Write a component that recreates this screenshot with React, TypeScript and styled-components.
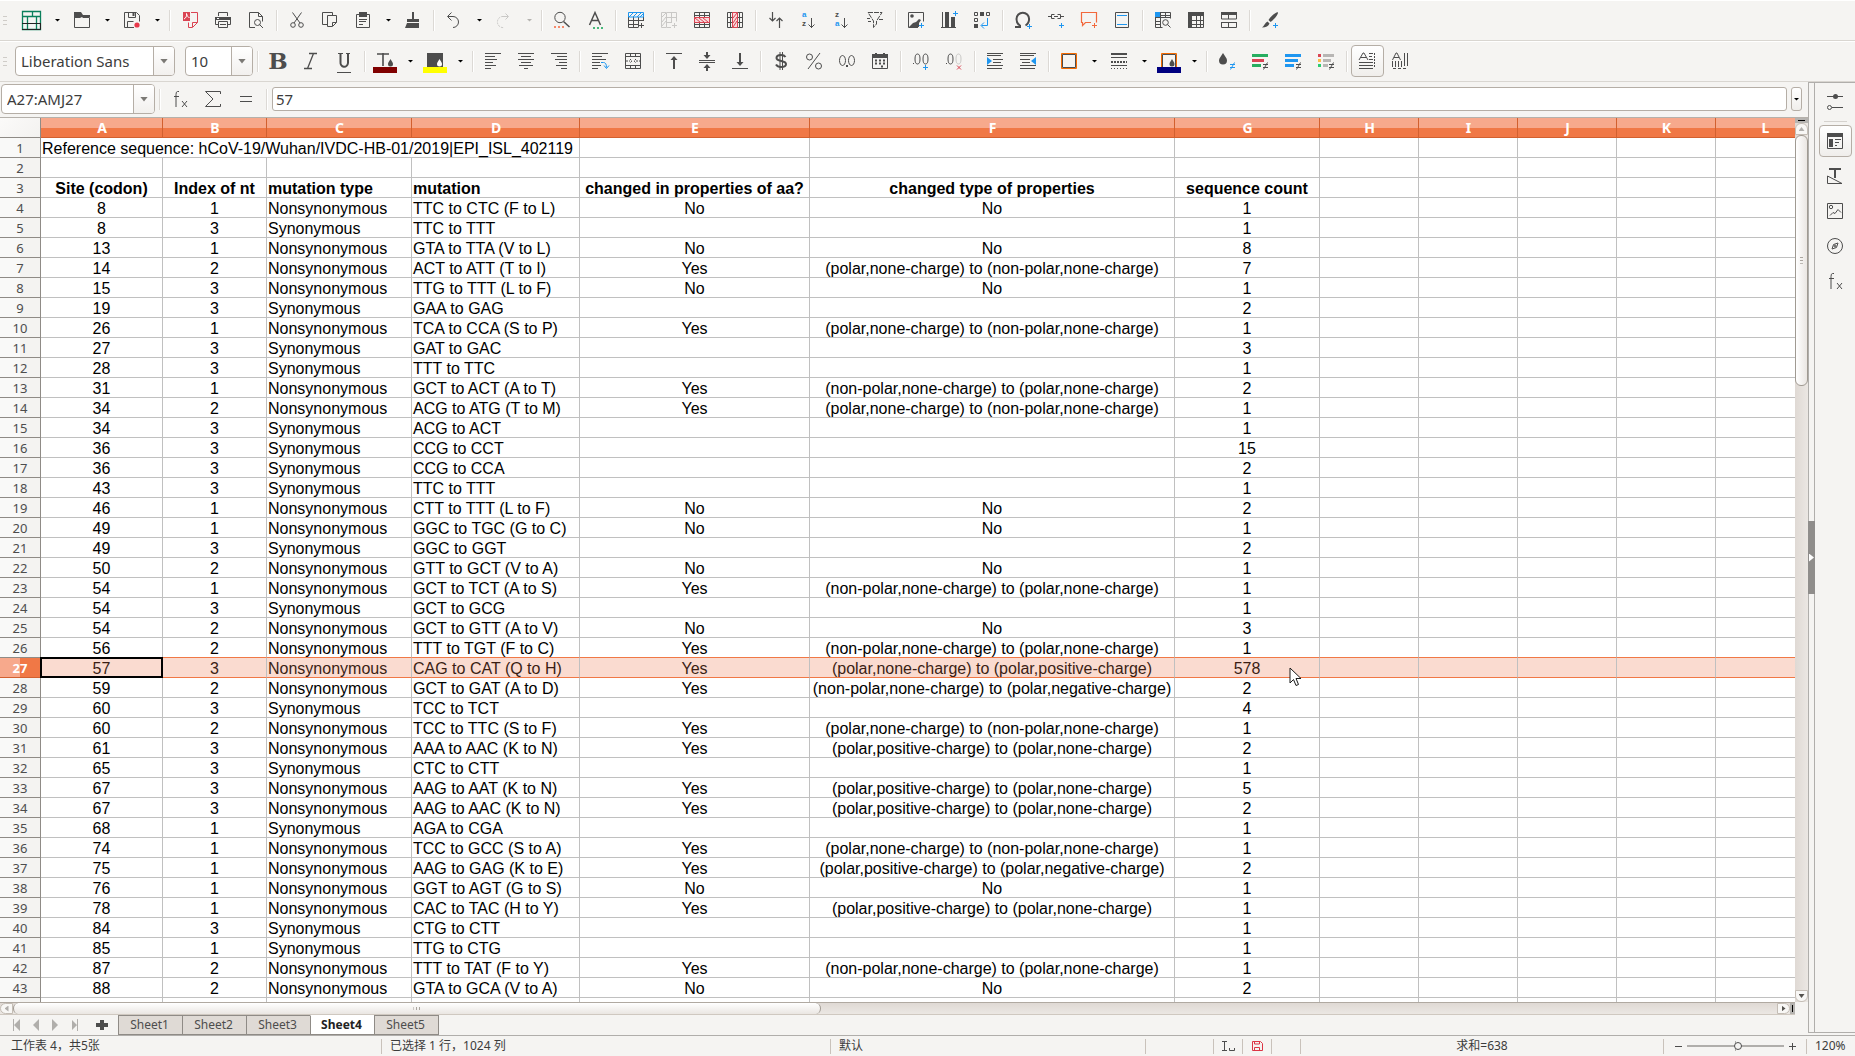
import React from "react";
import styled, { createGlobalStyle, css } from "styled-components";

/* ---------- palette ---------- */
const INK = "#4d4d4d";
const BLUE = "#1e96f0";
const RED = "#da4453";
const ORANGE = "#f2683c";
const PALE = "#c9c8c6";
const PANEL = "#f5f4f2";
const UI_FONT = `"Noto Sans", "Noto Sans CJK SC", sans-serif`;
const CELL_FONT = `"Liberation Sans", Arial, sans-serif`;

const GlobalStyle = createGlobalStyle`
  *, *::before, *::after { box-sizing: border-box; }
  body { margin: 0; background: ${PANEL}; overflow: hidden; }
  button, input { font: inherit; color: inherit; margin: 0; padding: 0; }
`;

/* ---------- icons, drawn on a 16px grid ---------- */
const Glyph = styled.svg`
  display: block;
  flex: none;
  width: 16px;
  height: 16px;
  overflow: visible;
  fill: none;
  stroke: ${INK};
  stroke-width: 1;
`;
const GlyphText = styled.text`
  stroke: none;
  font-family: ${CELL_FONT};
`;

const plus = (x: number, y: number, c: string = BLUE) => (
  <path d={`M${x - 2.5} ${y}h5M${x} ${y - 2.5}v5`} stroke={c} />
);
const lines = (ys: [number, number, number][], c: string = INK) => (
  <path d={ys.map(([x, y, w]) => `M${x} ${y}h${w}`).join("")} stroke={c} />
);
const notEqual = (c: string) => <path d="M11 11.500h5M11 14.500h5M15.500 9.500l-4 7" stroke={c} />;

const icons: Record<string, React.ReactNode> = {
  calc: (
    <>
      <path d="M-1.500 -.5h18v18h-18zM-1.500 4.500h18M3.500 4.500v13M8.500 -.5v5M12.500 4.500v13" stroke="#0b7f5b" strokeWidth="1.300" />
      <path d="M-2 11.500h19M-2 17.500h18.500v-6" stroke="#222" />
    </>
  ),
  open: (
    <>
      <path d="M.5 4v11.500h15v-10h-7" />
      <path d="M0 0h7l2 3h7v2H8l-2 1H0z" fill={INK} stroke="none" />
    </>
  ),
  save: (
    <>
      <path d="M10 15.500h-9.500v-15h12l3 3v6M3.500 15v-5.500h6M4.500 .5v5h7v-5" />
      <path d="M8.500 1h2v3h-2z" fill={INK} stroke="none" />
      <circle cx="13" cy="13" r="2.600" fill="#e8384a" stroke="none" />
    </>
  ),
  pdf: (
    <>
      <path d="M9 .5h6.500v10l-5 5h-4v-5" stroke={RED} />
      <path d="M10.500 15v-4.500h5" stroke={RED} />
      <path d="M1 0h7v9H1z" fill={RED} stroke="none" />
      <path d="M2 7c2-1 3-3 2.500-5.500C5 4 6 5.500 7.500 5.500" stroke="#fff" />
    </>
  ),
  print: (
    <>
      <path d="M3.500 4v-3.500h9v3.500M3.500 12.500h-3v-6h15v6h-3M3.500 9.500h9v6h-9zM5 12.500h6" />
      <path d="M0 5h16v3H0z" fill={INK} stroke="none" />
      <path d="M2 6.500h2" stroke="#fff" />
    </>
  ),
  preview: (
    <>
      <path d="M7 15.500h-5.500v-15h9l4 4v5M10.500 .5v4h4" />
      <circle cx="9.500" cy="10.500" r="3" />
      <path d="M11.500 12.500l3.500 3.500" />
    </>
  ),
  cut: (
    <>
      <circle cx="4" cy="13" r="2.300" />
      <circle cx="12" cy="13" r="2.300" />
      <path d="M3.500 .5l7.500 10.500M12.500 .5L5 11" />
    </>
  ),
  copy: (
    <>
      <path d="M5.500 12.500h-5v-12h10v3" />
      <path d="M5.500 3.500h9v7l-4 4h-5zM10.500 14v-3.500h4" />
    </>
  ),
  paste: (
    <>
      <path d="M1.500 2.500h13v13h-13zM4 7.500h8M4 9.500h7M4 12.500h4" />
      <path d="M4 0h8v5H4z" fill={INK} stroke="none" />
    </>
  ),
  brush: <path d="M7 0h2v7H7zM2 7h12v3H2zM2 11h12v5H0z" fill={INK} stroke="none" />,
  undo: <path d="M5.500 .5L1.500 4.500l4 4M2 4.500h5a5.500 5.500 0 0 1 0 11" />,
  redo: (
    <>
      <path d="M9.500 1.500l3 3-3 3M12 4.500h-5" stroke={PALE} />
      <path d="M7 4.500h-1a5.500 5.500 0 0 0 2 11" stroke={PALE} strokeDasharray="2 1" />
    </>
  ),
  find: (
    <>
      <circle cx="6" cy="5.500" r="5.200" />
      <path d="M9.500 9.500l6 5.500" strokeWidth="1.500" />
      <path d="M0 15h10" stroke="#f58a6c" strokeWidth="2" strokeDasharray="2 2" />
    </>
  ),
  spell: (
    <>
      <path d="M2.500 13L8 .5l5.500 12.500M4.500 8.500h7" strokeWidth="1.500" />
      <path d="M6 16h10" stroke="#46b97a" strokeWidth="2" strokeDasharray="2 2" />
    </>
  ),
  insRow: (
    <>
      <path d="M.5 5v10.500h10M5.500 5v10M10.500 5v10M15.500 5v4M0 8.500h15M0 12.500h11" />
      <path d="M.5 .5h15v4.500h-15zM1 5l4-4M5 5l4-4M9 5l4-4M12 5l3-3" stroke={BLUE} />
      {plus(13.5, 13.5, INK)}
    </>
  ),
  insCol: (
    <>
      <path d="M6 .5h9.500v9M10.500 0v10M6 5.500h10M6 10.500h5M6 15.500h4" stroke={PALE} />
      <path d="M.5 .5h5v15h-5zM1 5l4-4M1 10l4-5M1 14l4-5" stroke={PALE} />
      {plus(13.5, 13.5, PALE)}
    </>
  ),
  delRow: (
    <>
      <path d="M.5 .5h15v15h-15zM5.500 0v16M10.500 0v16M0 3.500h16M0 12.500h16" />
      <path d="M.5 5.500h15v5h-15z" fill="#f8d9dc" stroke={RED} />
      <path d="M1 6l5 4M5 6l5 4M9 6l5 4" stroke={RED} />
    </>
  ),
  delCol: (
    <>
      <path d="M.5 .5h15v15h-15zM0 5.500h16M0 10.500h16M3.500 0v16M12.500 0v16" />
      <path d="M5.500 .5h5v15h-5z" fill="#f8d9dc" stroke={RED} />
      <path d="M6 6l4-5M6 11l4-6M6 15l4-6" stroke={RED} />
    </>
  ),
  sort: <path d="M4.500 0v9M1.500 6l3 3 3-3M11.500 16V6M8.500 9l3-3 3 3" strokeWidth="1.200" />,
  asc: (
    <>
      <GlyphText x="1" y="5" fontSize="8" fontWeight="700" fill={BLUE}>a</GlyphText>
      <GlyphText x="1" y="14" fontSize="8" fontWeight="700" fill={INK}>z</GlyphText>
      <path d="M10.500 6v10M7.500 12.500l3 3 3-3" />
    </>
  ),
  desc: (
    <>
      <GlyphText x="1" y="5" fontSize="8" fontWeight="700" fill={INK}>z</GlyphText>
      <GlyphText x="1" y="14" fontSize="8" fontWeight="700" fill={BLUE}>a</GlyphText>
      <path d="M10.500 6v10M7.500 12.500l3 3 3-3" />
    </>
  ),
  filter: (
    <>
      <path d="M1 .5h14L9.500 9v3l-3 3.500V9z" strokeDasharray="5 1" />
      <path d="M0 6.500h3M12 7.500h4M1 9.500h3" />
    </>
  ),
  image: (
    <>
      <path d="M10 15.500H.5V.5h15v9" />
      <circle cx="4" cy="4" r="1.800" fill={INK} stroke="none" />
      <path d="M1 15l4-4 3-1 3-3 2 1-2 3v4z" fill={INK} stroke="none" />
      {plus(13.5, 13.5)}
    </>
  ),
  chart: (
    <>
      <path d="M1.500 0v15M0 15.500h15" />
      <path d="M4 0h4v15H4zM10 5h4v10h-4z" fill={INK} stroke="none" />
      {plus(14.5, 1.5)}
    </>
  ),
  pivot: (
    <>
      <path d="M.5 .5h3v3h-3zM12.500 .5h3v3h-3zM.5 6.500h3v3h-3z" />
      <path d="M6 0h4v4H6zM0 12h4v4H0z" fill={INK} stroke="none" />
      <path d="M13.500 6v7.500h-6M10 10.500l-3 3 3 3" stroke={BLUE} />
    </>
  ),
  omega: (
    <>
      <path d="M0 15h5v-1.500C2.500 12 1.500 9.500 1.500 7a6.300 6.300 0 0 1 12.600 0c0 2.500-1 5-3.600 6.500" strokeWidth="2" />
      {plus(14.5, 14.5)}
    </>
  ),
  link: (
    <>
      <path d="M0 4.500h4M12 4.500h4M6.500 2.500h-3v4h3M9.500 2.500h3v4h-3M6 4.500h4" />
      {plus(13.5, 13.5)}
    </>
  ),
  comment: (
    <>
      <path d="M10 10.500H4.500l-3 3v-3h-1V.5h15v10" stroke={ORANGE} strokeWidth="1.200" />
      {plus(13.5, 13.5, ORANGE)}
    </>
  ),
  header: (
    <>
      <path d="M1.500 .5h13v15h-13z" />
      <path d="M3 3.500h10M3 12.500h10" stroke={BLUE} />
    </>
  ),
  freeze: (
    <>
      <path d="M.5 .5h15v6M.5 .5v15h7M5.500 0v16M0 5.500h16M10.500 0v5M0 9.500h6M0 12.500h6M6 3.500h10" />
      <path d="M0 0h5v5H0z" fill={BLUE} stroke="none" />
      <circle cx="10.500" cy="10.500" r="2.800" />
      <path d="M12.500 12.500l3 3" />
    </>
  ),
  tableFill: (
    <>
      <path d="M.5 .5h15v15h-15zM8.500 4v12M12.500 4v12M4 8.500h12M4 12.500h12" />
      <path d="M0 0h16v4H4v12H0z" fill={INK} stroke="none" />
    </>
  ),
  split: (
    <>
      <path d="M0 0h16v3H0zM0 10h16v1H0z" fill={INK} stroke="none" />
      <path d="M.5 3v4h15V3M7.500 3v4M.5 10v5.500h15V10M7.500 10v5" />
    </>
  ),
  draw: (
    <>
      <path d="M15.500 0c-3 1-7 5-9 8l2 2c3-2 6.500-6 7.500-9zM5.500 9.500l2 2C6.500 14 4 15.500 0 15.500 2 14 3 11 5.500 9.500z" fill={INK} stroke="none" />
      {plus(13.5, 13.5)}
    </>
  ),

  bold: (
    <GlyphText x="8" y="16" textAnchor="middle" fontSize="23" fontWeight="700" fill={INK} style={{ fontFamily: `"DejaVu Serif", serif` }}>B</GlyphText>
  ),
  italic: <path d="M6 .5h8M1 15.500h8M10.500 .5l-6 15" strokeWidth="1.300" />,
  underline: (
    <>
      <path d="M2 .5h5M10 .5h4" />
      <path d="M4.500 0v9a3.500 4 0 0 0 7.500 1v-10" strokeWidth="2" />
      <path d="M1 19.500h14" />
    </>
  ),
  fontColor: (
    <>
      <path d="M0 1h12M6 0v13" strokeWidth="1.600" />
      <path d="M13.500 6c1.500 2.500 2.500 3.500 2.500 5a2.500 2.500 0 0 1-5 0c0-1.500 1-2.500 2.500-5z" fill={INK} stroke="none" />
      <path d="M-4 14h24v6H-4z" fill="#800000" stroke="none" />
    </>
  ),
  highlight: (
    <>
      <path d="M0 0h16v14H0z" fill={INK} stroke="none" />
      <path d="M12.500 6c1.500 2.500 2.500 3.500 2.500 5a2.500 2.500 0 0 1-5 0c0-1.500 1-2.500 2.500-5z" fill="#fff" stroke="none" />
      <path d="M-4 14h24v6H-4z" fill="#ffff00" stroke="none" />
    </>
  ),
  left: lines([[0, .5, 16], [0, 3.5, 10], [0, 6.5, 12], [0, 9.5, 8], [0, 12.5, 11], [0, 15.5, 6]]),
  center: lines([[0, .5, 16], [3, 3.5, 10], [0, 6.5, 16], [3, 9.5, 10], [1, 12.5, 14], [6, 15.5, 4]]),
  right: lines([[0, .5, 16], [6, 3.5, 10], [4, 6.5, 12], [8, 9.5, 8], [5, 12.5, 11], [10, 15.5, 6]]),
  wrap: (
    <>
      {lines([[0, .5, 16], [0, 3.5, 10], [0, 6.5, 14], [0, 9.5, 8], [0, 12.5, 9], [0, 15.5, 6]])}
      <path d="M9 9.500h2.500q3 0 3 5M12 12.500l2.500 3 2.500-3" stroke={BLUE} />
    </>
  ),
  merge: (
    <>
      <path d="M.5 .5h15v15h-15zM0 3.500h16M0 12.500h16M5.500 0v4M10.500 0v4M5.500 12v4M10.500 12v4" />
      <path d="M1 8h4M11 8h4M5 6l2 2-2 2M11 6L9 8l2 2" strokeDasharray="2 1" />
    </>
  ),
  top: (
    <>
      <path d="M0 .5h16" />
      <path d="M7 6h2v10H7zM8 3l3.500 4h-7z" fill={INK} stroke="none" />
    </>
  ),
  middle: (
    <>
      <path d="M0 7.500h16M0 9.500h16" />
      <path d="M7 -1h2v3h2.500L8 6 4.500 2H7zM7 18h2v-3h2.500L8 11l-3.500 4H7z" fill={INK} stroke="none" />
    </>
  ),
  bottom: (
    <>
      <path d="M0 15.500h16" />
      <path d="M7 0h2v9H7zM8 13l3.500-4h-7z" fill={INK} stroke="none" />
    </>
  ),
  currency: (
    <>
      <path d="M12.500 4C11.500 2.500 10 2 8 2 5 2 3.500 3.200 3.500 5c0 4 9.500 2 9.500 6 0 2-2 3-5 3-2.500 0-4-.8-5-2.500" strokeWidth="2" />
      <path d="M7 -1v18M9.500 -1v18" />
    </>
  ),
  percent: (
    <>
      <circle cx="3.500" cy="4" r="3" />
      <circle cx="12.500" cy="13" r="3" />
      <path d="M14 0L2 16" />
    </>
  ),
  number: (
    <>
      <ellipse cx="3.500" cy="7.500" rx="3" ry="5" />
      <ellipse cx="12.500" cy="7.500" rx="3" ry="5" />
      <path d="M7 12h2v2H7z" fill={INK} stroke="none" />
    </>
  ),
  date: (
    <>
      <path d="M.5 2v13.500h15V2" />
      <path d="M0 1h3V0h2v1h6V0h2v1h3v4H0z" fill={INK} stroke="none" />
      <path d="M3 7.500h10M3 10.500h10M9 13.500h4" strokeWidth="2" strokeDasharray="2 2" />
    </>
  ),
  addDec: (
    <>
      <ellipse cx="4.500" cy="6" rx="2.500" ry="5" />
      <ellipse cx="12.500" cy="6" rx="2.500" ry="5" />
      <path d="M0 10.500h1" />
      {plus(12.5, 14.5)}
    </>
  ),
  delDec: (
    <>
      <ellipse cx="4.500" cy="6" rx="2.500" ry="5" />
      <ellipse cx="12.500" cy="6" rx="2.500" ry="5" stroke={PALE} />
      <path d="M0 10.500h1" />
      <path d="M11 12.500l4 4M15 12.500l-4 4" stroke={RED} />
    </>
  ),
  indent: (
    <>
      {lines([[0, .5, 16], [0, 2.5, 14], [6, 6.5, 10], [6, 9.5, 8], [0, 12.5, 16], [0, 15.5, 15]])}
      <path d="M0 4l5 4-5 4z" fill={BLUE} stroke="none" />
    </>
  ),
  outdent: (
    <>
      {lines([[0, .5, 16], [0, 2.5, 14], [0, 6.5, 10], [2, 9.5, 8], [0, 12.5, 16], [0, 15.5, 15]])}
      <path d="M16 4l-5 4 5 4z" fill={BLUE} stroke="none" />
    </>
  ),
  borders: (
    <>
      <path d="M.5 .5h15v15h-15z" stroke="#f56a00" />
      <path d="M1.500 1.500h13v13h-13z" />
    </>
  ),
  lineStyle: (
    <>
      <path d="M0 1h16" strokeWidth="2" />
      <path d="M0 4.500h16" />
      <path d="M0 9h16" strokeWidth="2" strokeDasharray="2 1" />
      <path d="M0 12.500h16" />
      <path d="M0 15.500h16" strokeDasharray="1 2" />
    </>
  ),
  borderColor: (
    <>
      <path d="M.5 14V.5h15V14" stroke="#f56a00" />
      <path d="M1.500 14V1.500h13v12.500" />
      <path d="M11 6c1.500 2.500 2.500 3.500 2.500 5a2.500 2.500 0 0 1-5 0c0-1.500 1-2.500 2.500-5z" fill={INK} stroke="none" />
      <path d="M-4 14h24v6H-4z" fill="#000080" stroke="none" />
    </>
  ),
  drop: (
    <>
      <path d="M4 0c2 3.500 4 5 4 7.500a4 4 0 0 1-8 0C0 5 2 3.500 4 0z" fill={INK} stroke="none" />
      {notEqual(BLUE)}
    </>
  ),
  condA: (
    <>
      <path d="M0 2.500h16M0 12.500h9" stroke="#27ae60" strokeWidth="3" />
      <path d="M0 7.500h12" stroke={RED} strokeWidth="3" />
      {notEqual(INK)}
    </>
  ),
  condB: (
    <>
      <path d="M0 2.500h16M0 7.500h13M0 12.500h9" stroke={BLUE} strokeWidth="3" />
      {notEqual(INK)}
    </>
  ),
  condC: (
    <>
      <path d="M5 2.500h11M5 7.500h8M5 12.500h5" stroke="#b8b6b4" strokeWidth="3" />
      <path d="M0 2.500h3" stroke={RED} strokeWidth="3" />
      <path d="M0 7.500h3" stroke="#fdbc4b" strokeWidth="3" />
      <path d="M0 12.500h3" stroke="#2ecc71" strokeWidth="3" />
      {notEqual(INK)}
    </>
  ),
  ltr: (
    <>
      <path d="M0 7L4 0h1l4 7M2 4.500h5M10 .5h4M10 3.500h3M10 6.500h4M0 9.500h14M0 12.500h14M0 15.500h14" />
      <path d="M15.500 0v2M15.500 3v2M15.500 6v2M15.500 9v2M15.500 12v2" />
    </>
  ),
  ttb: (
    <>
      <path d="M.5 7L4 0h1l3.500 7M2 4.500h5M.5 8v6M3.500 8v6M6.500 8v6M9.500 8v6M12.500 0v13M15.500 0v13" />
      <path d="M1 15.500h15" strokeDasharray="3 2" />
    </>
  ),

  fx: (
    <>
      <path d="M7 .5h-1.500q-1.500 0-1.500 3v12.500M2 5.500h5" />
      <path d="M10 10l5 6M15 10l-5 6" />
    </>
  ),
  sum: <path d="M15.500 3V.5H.5L8 8 .5 15.500h15V13" />,
  equals: <path d="M2 5.500h12M2 10.500h12" />,

  sliders: (
    <>
      <path d="M0 2.500h16M5 13.500h11" />
      <circle cx="8.500" cy="2.500" r="2.500" fill={INK} stroke="none" />
      <circle cx="2.500" cy="13.500" r="2" />
    </>
  ),
  properties: (
    <>
      <path d="M.5 .5h15v15h-15zM8 6.500h6M8 9.500h4M8 12.500h2" />
      <path d="M0 0h16v4H0zM2 6h4v8H2z" fill={INK} stroke="none" />
    </>
  ),
  styles: (
    <>
      <path d="M2 1h12M8 0v10" strokeWidth="2" />
      <path d="M.5 8v7.500H15z" />
    </>
  ),
  gallery: (
    <>
      <path d="M.5 .5h15v15h-15zM3 12.500l3-3 2 1 3-4 3 3" />
      <circle cx="4" cy="4" r="1.700" />
    </>
  ),
  navigator: (
    <>
      <circle cx="8" cy="8" r="7.500" />
      <path d="M11 5l-1.500 4.500L5 11l1.500-4.500z" />
      <circle cx="8" cy="8" r="1" />
    </>
  ),
};

const Icon = ({ name }: { name: string }) => (
  <Glyph viewBox="0 0 16 16" aria-hidden="true">{icons[name]}</Glyph>
);

/* ---------- shell ---------- */
const Shell = styled.div`
  display: flex;
  flex-direction: column;
  height: 100vh;
  background: ${PANEL};
  color: #3c3c3c;
  font: 15px/20px ${UI_FONT};
`;

/* ---------- toolbars ---------- */
const Toolbar = styled.div`
  display: flex;
  align-items: center;
  flex: none;
  height: 41px;
  padding-bottom: 1px;
  border-top: 1px solid #fff;
  border-bottom: 1px solid #d9d6d1;
`;
const Grip = styled.span<{ $width: number }>`
  flex: none;
  width: ${(p) => p.$width}px;
  height: 9px;
  background: repeating-linear-gradient(#cfccc8 0 1px, transparent 1px 4px) 3px 0 / 4px 9px no-repeat;
`;
const Button = styled.button<{ $checked?: boolean }>`
  display: flex;
  align-items: center;
  flex: none;
  width: 33px;
  height: 32px;
  padding-left: 7px;
  border: 1px solid transparent;
  border-radius: 4px;
  background: none;
  ${(p) => p.$checked && css`
    border-color: #b5aea6;
    background: linear-gradient(#fff, #f0eeeb);
  `}
`;
const ArrowButton = styled.button`
  flex: none;
  width: 17px;
  height: 32px;
  border: 0;
  background: none;
  &::before {
    content: "";
    display: block;
    margin: 0 auto;
    width: 6px;
    height: 3px;
    background: #000;
    clip-path: polygon(0 0, 100% 0, 50% 100%);
  }
  &:disabled::before { background: #b5b3b0; }
`;
const Divider = styled.span`
  flex: none;
  width: 8px;
  height: 21px;
  background: linear-gradient(90deg, #dcd9d5 50%, #fff 50%) 3px 0 / 2px 100% no-repeat;
`;

type Tool = string | [string, string];
const topTools: Tool[] = [
  ["calc", "+"], ["open", "+"], ["save", "+"], "|", "pdf", "print", "preview", "|",
  "cut", "copy", ["paste", "+"], "brush", "|", ["undo", "+"], ["redo", "-"], "|",
  "find", "spell", "|", "insRow", "insCol", "delRow", "delCol", "|",
  "sort", "asc", "desc", "filter", "|", "image", "chart", "pivot", "|",
  "omega", "link", "comment", "header", "|", "freeze", "tableFill", "split", "|", "draw",
];
const formatTools: Tool[] = [
  "|", "bold", "italic", "underline", "|", ["fontColor", "+"], ["highlight", "+"], "|",
  "left", "center", "right", "|", "wrap", "merge", "|", "top", "middle", "bottom", "|",
  "currency", "percent", "number", "date", "|", "addDec", "delDec", "|", "indent", "outdent", "|",
  ["borders", "+"], ["lineStyle", "+"], ["borderColor", "+"], "|",
  "drop", "condA", "condB", "condC", "|", "ltr", "ttb",
];

const Tools = ({ items }: { items: Tool[] }) => (
  <>
    {items.map((t, i) => {
      if (t === "|") return <Divider key={i} />;
      const name = typeof t === "string" ? t : t[0];
      const off = typeof t !== "string" && t[1] === "-";
      return (
        <React.Fragment key={i}>
          <Button type="button" aria-label={name} disabled={off} $checked={name === "ltr"}>
            <Icon name={name} />
          </Button>
          {typeof t !== "string" && <ArrowButton type="button" aria-label={`${name} options`} disabled={off} />}
        </React.Fragment>
      );
    })}
  </>
);

const Combo = styled.div<{ $width: number }>`
  display: flex;
  flex: none;
  width: ${(p) => p.$width}px;
  height: 30px;
  border: 1px solid #b5aea6;
  border-radius: 4px;
  background: #fff;
  overflow: hidden;
`;
const ComboInput = styled.input`
  flex: 1;
  min-width: 0;
  padding-left: 5px;
  border: 0;
  background: none;
  outline: 0;
`;
const ComboArrow = styled.button`
  flex: none;
  width: 21px;
  border: 0;
  border-left: 1px solid #b5aea6;
  background: linear-gradient(#fff, #f2f0ee);
  &::before {
    content: "";
    display: block;
    margin: 0 auto;
    width: 8px;
    height: 5px;
    background: #7b7975;
    clip-path: polygon(0 0, 100% 0, 50% 100%);
  }
`;
const ComboBox = ({ label, value, width }: { label: string; value: string; width: number }) => (
  <Combo $width={width}>
    <ComboInput aria-label={label} defaultValue={value} />
    <ComboArrow type="button" aria-label={`${label} list`} />
  </Combo>
);
const FormatFields = styled.div`
  display: flex;
  gap: 10px;
  padding-right: 1px;
`;

/* ---------- main area ---------- */
const Main = styled.div`
  display: flex;
  flex: 1;
  min-height: 0;
`;
const Document = styled.main`
  display: flex;
  flex-direction: column;
  flex: 1;
  min-width: 0;
`;
const FormulaBar = styled.div`
  display: flex;
  align-items: center;
  flex: none;
  height: 36px;
  padding: 0 6px 1px 1px;
  border-bottom: 1px solid #b5b1ab;
`;
const FormulaTools = styled.div`
  display: flex;
  align-items: center;
  margin: 0 1px;
`;
const FormulaInput = styled.input`
  flex: 1;
  min-width: 0;
  height: 24px;
  padding-left: 3px;
  border: 1px solid #b5aea6;
  border-radius: 3px;
  background: #fff;
  outline: 0;
`;
const FormulaExpand = styled(ArrowButton)`
  width: 11px;
  height: 24px;
  margin-left: 4px;
  border: 1px solid #b5aea6;
  border-radius: 3px;
  background: linear-gradient(#fff, #f0eeeb);
`;

const SheetArea = styled.div`
  display: flex;
  flex: 1;
  min-height: 0;
`;
const Viewport = styled.div`
  flex: 1;
  min-width: 0;
  overflow: hidden;
  background: #fff;
`;
const Grid = styled.table`
  width: 1814px;
  table-layout: fixed;
  border-collapse: separate;
  border-spacing: 0;
  font: 16px/17px ${CELL_FONT};
  color: #000;
`;
const Col = styled.col<{ $width: number }>`
  width: ${(p) => p.$width}px;
`;
const Corner = styled.td`
  height: 20px;
  padding: 0;
  border-right: 1px solid #8f8b86;
  border-bottom: 1px solid #8f8b86;
  background: linear-gradient(135deg, #fbfaf9, #f3f2f0);
`;
const ColumnHead = styled.th`
  height: 20px;
  padding: 0 0 0 1px;
  border-right: 1px solid #d2602f;
  border-bottom: 1px solid #d2602f;
  background: linear-gradient(#f7a98c 50%, #f07846 50%);
  color: #fff;
  font: 700 14px/19px ${UI_FONT};
`;
const RowHead = styled.th<{ $selected?: boolean }>`
  height: 20px;
  padding: 1px 0 0;
  border-right: 1px solid #8f8b86;
  border-bottom: 1px solid #8f8b86;
  background: linear-gradient(90deg, #f9f9f8 50%, #f4f3f1 50%);
  color: ${INK};
  font: 400 13px/18px ${UI_FONT};
  ${(p) => p.$selected && css`
    border-color: #d2602f;
    background: linear-gradient(90deg, #f7a98c 50%, #f07846 50%);
    color: #fff;
    font-weight: 700;
  `}
`;
const Cell = styled.td<{ $align?: "left" | "center"; $bold?: boolean; $selected?: boolean; $edge?: boolean }>`
  position: relative;
  height: 20px;
  padding: 2px 1px 0;
  border-right: 1px solid #c0c0c0;
  border-bottom: 1px solid ${(p) => (p.$selected || p.$edge ? "#f07846" : "#c0c0c0")};
  background: ${(p) => (p.$selected ? "#fadbd0" : "#fff")};
  color: ${(p) => (p.$selected ? "#3b1e14" : "#000")};
  font-weight: ${(p) => (p.$bold ? 700 : 400)};
  text-align: ${(p) => p.$align ?? "center"};
  white-space: nowrap;
`;
/* outline of the active cell, drawn over its grid lines */
const ActiveFrame = styled.span`
  position: absolute;
  inset: -1px;
  border: 2px solid #000;
`;
const Pointer = styled.svg`
  position: absolute;
  z-index: 2;
  left: 114px;
  top: 9px;
  width: 13px;
  height: 20px;
`;

/* ---------- scroll bars ---------- */
const VScroll = styled.div`
  display: flex;
  flex-direction: column;
  flex: none;
  width: 13px;
  background: linear-gradient(90deg, #dfd9d4, #ebe7e3);
`;
const HScroll = styled.div`
  display: flex;
  flex: none;
  height: 13px;
  margin-right: 13px;
  background: linear-gradient(#dfd9d4, #ebe7e3);
  border-top: 1px solid #b0a9a1;
  border-bottom: 1px solid #cfc8c0;
`;
const SplitHandle = styled.span<{ $vertical?: boolean }>`
  flex: none;
  display: flex;
  align-items: center;
  justify-content: center;
  background: #b5b3b0;
  width: ${(p) => (p.$vertical ? "13px" : "5px")};
  height: ${(p) => (p.$vertical ? "5px" : "auto")};
  &::before {
    content: "";
    background: #000;
    width: ${(p) => (p.$vertical ? "7px" : "1px")};
    height: ${(p) => (p.$vertical ? "1px" : "7px")};
  }
`;
const arrowShape = {
  up: "polygon(50% 0, 100% 100%, 0 100%)",
  down: "polygon(0 0, 100% 0, 50% 100%)",
  left: "polygon(100% 0, 100% 100%, 0 50%)",
  right: "polygon(0 0, 100% 50%, 0 100%)",
};
const ScrollArrow = styled.button<{ $dir: keyof typeof arrowShape; $dim?: boolean }>`
  display: flex;
  align-items: center;
  justify-content: center;
  flex: none;
  width: 13px;
  height: ${(p) => (p.$dir === "up" || p.$dir === "down" ? "12px" : "11px")};
  border: 1px solid #c4bdb5;
  border-radius: ${(p) =>
    ({ up: "6px 6px 0 0", down: "0 0 6px 6px", left: "6px 0 0 6px", right: "0 6px 6px 0" })[p.$dir]};
  background: #f8f7f5;
  &::before {
    content: "";
    width: ${(p) => (p.$dir === "up" || p.$dir === "down" ? 6 : 4)}px;
    height: ${(p) => (p.$dir === "up" || p.$dir === "down" ? 4 : 6)}px;
    background: ${(p) => (p.$dim ? "#b0aeab" : "#55534f")};
    clip-path: ${(p) => arrowShape[p.$dir]};
  }
`;
const Track = styled.div<{ $vertical?: boolean }>`
  display: flex;
  flex-direction: ${(p) => (p.$vertical ? "column" : "row")};
  flex: 1;
  min-width: 0;
  min-height: 0;
`;
const Thumb = styled.span<{ $vertical?: boolean; $share: string }>`
  display: flex;
  align-items: center;
  justify-content: center;
  flex: 0 0 ${(p) => p.$share};
  border: 1px solid #a09a92;
  border-width: ${(p) => (p.$vertical ? "1px" : "0 1px")};
  border-radius: 6px;
  background: linear-gradient(${(p) => (p.$vertical ? "90deg" : "180deg")}, #fff, #eae6e2);
  &::before {
    content: "";
    width: 7px;
    height: 7px;
    background: repeating-linear-gradient(
      ${(p) => (p.$vertical ? "180deg" : "90deg")}, #aaa59f 0 1px, transparent 1px 3px
    );
    clip-path: ${(p) => (p.$vertical ? "inset(0 2px)" : "inset(2px 0)")};
  }
`;

/* ---------- sheet tabs ---------- */
const TabBar = styled.nav`
  display: flex;
  align-items: center;
  flex: none;
  height: 20px;
`;
const TabNav = styled.div`
  display: flex;
  align-items: center;
  flex: none;
  width: 118px;
  padding-left: 12px;
`;
const TabNavButton = styled.button<{ $wide?: boolean }>`
  display: flex;
  flex: none;
  width: ${(p) => (p.$wide ? 24 : 20)}px;
  border: 0;
  background: none;
`;
const TabGlyph = styled.svg`
  flex: none;
  width: 12px;
  height: 12px;
  fill: #b0aeab;
`;
const Tab = styled.button<{ $active?: boolean }>`
  width: 65px;
  height: 20px;
  margin-right: -1px;
  padding-right: 2px;
  border: 1px solid #8f8b86;
  background: ${(p) => (p.$active ? "#fff" : "#dfdad5")};
  border-top-color: ${(p) => (p.$active ? "#fff" : "#8f8b86")};
  color: ${(p) => (p.$active ? "#222" : INK)};
  font: ${(p) => (p.$active ? 700 : 400)} 12px/18px ${UI_FONT};
`;

/* ---------- sidebar ---------- */
const Splitter = styled.div`
  display: flex;
  align-items: center;
  flex: none;
  width: 7px;
  margin-bottom: 2px;
  border: 1px solid #b0aeab;
`;
const SplitterGrip = styled.button`
  width: 7px;
  height: 73px;
  margin: 0 -1px;
  flex: none;
  border: 0;
  background: #8f8d8b;
  &::before {
    content: "";
    display: block;
    margin-left: 1px;
    width: 5px;
    height: 8px;
    background: #fff;
    clip-path: polygon(0 0, 100% 50%, 0 100%);
  }
`;
const Sidebar = styled.aside`
  display: flex;
  flex-direction: column;
  align-items: center;
  gap: 3px;
  flex: none;
  width: 40px;
  margin-bottom: 2px;
  padding: 3px 0 0 1px;
  border-top: 1px solid #b0aeab;
  border-bottom: 1px solid #b0aeab;
`;
const SidebarRule = styled.hr`
  width: 23px;
  height: 1px;
  margin: 0;
  border: 0;
  background: #d5d2ce;
`;

/* ---------- status bar ---------- */
const Status = styled.footer`
  display: flex;
  align-items: center;
  flex: none;
  height: 21px;
  border-top: 1px solid #b0aeab;
  font-size: 12px;
`;
const Field = styled.div<{ $width?: number; $grow?: number; $center?: boolean; $first?: boolean }>`
  display: flex;
  align-items: center;
  justify-content: ${(p) => (p.$center ? "center" : "flex-start")};
  flex: ${(p) => (p.$grow ? `${p.$grow} 1 0` : "none")};
  width: ${(p) => (p.$width ? `${p.$width}px` : "auto")};
  height: 15px;
  padding-left: ${(p) => (p.$center ? 0 : p.$first ? 11 : 8)}px;
  border-left: ${(p) => (p.$first ? "0" : "1px solid #c9c2bb")};
  white-space: nowrap;
`;
const ZoomButton = styled.button`
  width: 17px;
  height: 16px;
  border: 0;
  background: none;
`;
const StepGlyph = styled.svg`
  display: block;
  margin: 0 auto;
  width: 7px;
  height: 7px;
  stroke: ${INK};
`;
const ZoomRange = styled.input`
  appearance: none;
  width: 97px;
  height: 12px;
  background: linear-gradient(#b0aeab, #b0aeab) 0 5px / 100% 2px no-repeat,
    linear-gradient(#b0aeab, #b0aeab) 48px 1px / 1px 10px no-repeat;
  &::-webkit-slider-thumb {
    appearance: none;
    width: 8px;
    height: 8px;
    border: 1px solid ${INK};
    border-radius: 50%;
    background: ${PANEL};
  }
`;

/* ---------- sheet data ---------- */
const columns: [string, number][] = [
  ["A", 122], ["B", 104], ["C", 145], ["D", 168], ["E", 230], ["F", 365],
  ["G", 145], ["H", 99], ["I", 99], ["J", 99], ["K", 99], ["L", 99],
];
const headings = [
  "Site (codon)", "Index of nt", "mutation type", "mutation",
  "changed in properties of aa?", "changed type of properties", "sequence count",
];
const P = "polar,none-charge";
const N = "non-polar,none-charge";
const POS = "polar,positive-charge";
const NEG = "polar,negative-charge";
const change = (a: string, b: string) => `(${a}) to (${b})`;

/* site, nt index, mutation, sequence count, then "No" or the pair of properties when nonsynonymous */
type Entry = [number, number, string, number, ("No" | [string, string])?];
const entries: Entry[] = [
  [8, 1, "TTC to CTC (F to L)", 1, "No"],
  [8, 3, "TTC to TTT", 1],
  [13, 1, "GTA to TTA (V to L)", 8, "No"],
  [14, 2, "ACT to ATT (T to I)", 7, [P, N]],
  [15, 3, "TTG to TTT (L to F)", 1, "No"],
  [19, 3, "GAA to GAG", 2],
  [26, 1, "TCA to CCA (S to P)", 1, [P, N]],
  [27, 3, "GAT to GAC", 3],
  [28, 3, "TTT to TTC", 1],
  [31, 1, "GCT to ACT (A to T)", 2, [N, P]],
  [34, 2, "ACG to ATG (T to M)", 1, [P, N]],
  [34, 3, "ACG to ACT", 1],
  [36, 3, "CCG to CCT", 15],
  [36, 3, "CCG to CCA", 2],
  [43, 3, "TTC to TTT", 1],
  [46, 1, "CTT to TTT (L to F)", 2, "No"],
  [49, 1, "GGC to TGC (G to C)", 1, "No"],
  [49, 3, "GGC to GGT", 2],
  [50, 2, "GTT to GCT (V to A)", 1, "No"],
  [54, 1, "GCT to TCT (A to S)", 1, [N, P]],
  [54, 3, "GCT to GCG", 1],
  [54, 2, "GCT to GTT (A to V)", 3, "No"],
  [56, 2, "TTT to TGT (F to C)", 1, [N, P]],
  [57, 3, "CAG to CAT (Q to H)", 578, [P, POS]],
  [59, 2, "GCT to GAT (A to D)", 2, [N, NEG]],
  [60, 3, "TCC to TCT", 4],
  [60, 2, "TCC to TTC (S to F)", 1, [P, N]],
  [61, 3, "AAA to AAC (K to N)", 2, [POS, P]],
  [65, 3, "CTC to CTT", 1],
  [67, 3, "AAG to AAT (K to N)", 5, [POS, P]],
  [67, 3, "AAG to AAC (K to N)", 2, [POS, P]],
  [68, 1, "AGA to CGA", 1],
  [74, 1, "TCC to GCC (S to A)", 1, [P, N]],
  [75, 1, "AAG to GAG (K to E)", 2, [POS, NEG]],
  [76, 1, "GGT to AGT (G to S)", 1, "No"],
  [78, 1, "CAC to TAC (H to Y)", 1, [POS, P]],
  [84, 3, "CTG to CTT", 1],
  [85, 1, "TTG to CTG", 1],
  [87, 2, "TTT to TAT (F to Y)", 1, [N, P]],
  [88, 2, "GTA to GCA (V to A)", 2, "No"],
];
const toCells = ([site, nt, mutation, count, effect]: Entry): (string | number)[] => [
  site,
  nt,
  effect ? "Nonsynonymous" : "Synonymous",
  mutation,
  effect ? (effect === "No" ? "No" : "Yes") : "",
  effect ? (effect === "No" ? "No" : change(effect[0], effect[1])) : "",
  count,
];
const SELECTED_ROW = 27;
const alignOf = (c: number) => (c === 2 || c === 3 ? "left" : "center");

const SheetRow = ({ row, cells, bold }: { row: number | ""; cells: (string | number)[]; bold?: boolean }) => {
  const selected = row === SELECTED_ROW;
  return (
    <tr>
      <RowHead scope="row" $selected={selected}>{row}</RowHead>
      {columns.map(([key], c) => (
        <Cell key={key} $align={alignOf(c)} $bold={bold} $selected={selected} $edge={row === SELECTED_ROW - 1}>
          {cells[c] ?? ""}
          {selected && c === 0 && <ActiveFrame />}
          {selected && c === 6 && (
            <Pointer viewBox="0 0 13 20" aria-hidden="true">
              <path d="M1 1v15l3.500-3.500L7 18.500l2.500-1L7 11.500h5z" fill="#fff" stroke="#1a1a1a" />
            </Pointer>
          )}
        </Cell>
      ))}
    </tr>
  );
};

const Sheet = () => (
  <Grid>
    <colgroup>
      <Col $width={41} />
      {columns.map(([key, width]) => <Col key={key} $width={width} />)}
    </colgroup>
    <thead>
      <tr>
        <Corner />
        {columns.map(([key]) => <ColumnHead key={key} scope="col">{key}</ColumnHead>)}
      </tr>
    </thead>
    <tbody>
      <tr>
        <RowHead scope="row">1</RowHead>
        <Cell colSpan={4} $align="left">Reference sequence: hCoV-19/Wuhan/IVDC-HB-01/2019|EPI_ISL_402119</Cell>
        {columns.slice(4).map(([key]) => <Cell key={key} />)}
      </tr>
      <SheetRow row={2} cells={[]} />
      <SheetRow row={3} cells={headings} bold />
      {entries.map((e, i) => <SheetRow key={i} row={i + 4} cells={toCells(e)} />)}
      <SheetRow row="" cells={[]} />
    </tbody>
  </Grid>
);

export default function App() {
  return (
    <Shell>
      <GlobalStyle />
      <Toolbar role="toolbar" aria-label="Standard">
        <Grip $width={16} />
        <Tools items={topTools} />
      </Toolbar>
      <Toolbar role="toolbar" aria-label="Formatting">
        <Grip $width={15} />
        <FormatFields>
          <ComboBox label="Font name" value="Liberation Sans" width={160} />
          <ComboBox label="Font size" value="10" width={68} />
        </FormatFields>
        <Tools items={formatTools} />
      </Toolbar>

      <Main>
        <Document>
          <FormulaBar>
            <ComboBox label="Name box" value="A27:AMJ27" width={154} />
            <FormulaTools>
              <Divider />
              <Button type="button" aria-label="Function wizard"><Icon name="fx" /></Button>
              <Button type="button" aria-label="Sum"><Icon name="sum" /></Button>
              <Button type="button" aria-label="Formula"><Icon name="equals" /></Button>
              <Divider />
            </FormulaTools>
            <FormulaInput aria-label="Input line" defaultValue="57" />
            <FormulaExpand type="button" aria-label="Expand formula bar" />
          </FormulaBar>

          <SheetArea>
            <Viewport><Sheet /></Viewport>
            <VScroll>
              <SplitHandle $vertical />
              <ScrollArrow type="button" aria-label="Scroll up" $dir="up" $dim />
              <Track $vertical><Thumb $vertical $share="29.3%" /></Track>
              <ScrollArrow type="button" aria-label="Scroll down" $dir="down" />
            </VScroll>
          </SheetArea>
          <HScroll>
            <ScrollArrow type="button" aria-label="Scroll left" $dir="left" $dim />
            <Track><Thumb $share="45.8%" /></Track>
            <ScrollArrow type="button" aria-label="Scroll right" $dir="right" />
            <SplitHandle />
          </HScroll>

          <TabBar>
            <TabNav>
              <TabNavButton type="button" aria-label="First sheet">
                <TabGlyph viewBox="0 0 12 12"><path d="M1 0h1v12H1zM8 0v12L2 6z" /></TabGlyph>
              </TabNavButton>
              <TabNavButton type="button" aria-label="Previous sheet">
                <TabGlyph viewBox="0 0 12 12"><path d="M7 0v12L1 6z" /></TabGlyph>
              </TabNavButton>
              <TabNavButton type="button" aria-label="Next sheet">
                <TabGlyph viewBox="0 0 12 12"><path d="M0 0v12l6-6z" /></TabGlyph>
              </TabNavButton>
              <TabNavButton type="button" aria-label="Last sheet" $wide>
                <TabGlyph viewBox="0 0 12 12"><path d="M-1 0v12l6-6zM5 0h1v12H5z" /></TabGlyph>
              </TabNavButton>
              <TabNavButton type="button" aria-label="Add sheet">
                <TabGlyph viewBox="0 0 12 12">
                  <path d="M4 1h4v3h4v4H8v3H4V8H0V4h4z" fill={INK} />
                </TabGlyph>
              </TabNavButton>
            </TabNav>
            {[1, 2, 3, 4, 5].map((n) => (
              <Tab key={n} type="button" $active={n === 4}>{`Sheet${n}`}</Tab>
            ))}
          </TabBar>
        </Document>

        <Splitter><SplitterGrip type="button" aria-label="Hide sidebar" /></Splitter>
        <Sidebar>
          <Button type="button" aria-label="Sidebar settings"><Icon name="sliders" /></Button>
          <SidebarRule />
          <Button type="button" aria-label="Properties" $checked><Icon name="properties" /></Button>
          <Button type="button" aria-label="Styles"><Icon name="styles" /></Button>
          <Button type="button" aria-label="Gallery"><Icon name="gallery" /></Button>
          <Button type="button" aria-label="Navigator"><Icon name="navigator" /></Button>
          <Button type="button" aria-label="Functions"><Icon name="fx" /></Button>
        </Sidebar>
      </Main>

      <Status>
        <Field $width={381} $first>工作表 4，共5张</Field>
        <Field $grow={440}>已选择 1 行，1024 列</Field>
        <Field $grow={306}>默认</Field>
        <Field $width={68} />
        <Field $width={29}>
          <Glyph viewBox="0 0 16 16" aria-hidden="true">
            <path d="M0 3.500h5M2.500 3v10M0 12.500h5M7.500 10v2.500h5V10" />
          </Glyph>
        </Field>
        <Field $width={29}>
          <Glyph viewBox="0 0 16 16" aria-hidden="true">
            <path d="M1.500 3.500h8l2 2v7h-10zM3.500 3v3h5V3M3.500 12.500v-3h5v3" stroke="#dc3545" />
          </Glyph>
        </Field>
        <Field $width={29} />
        <Field $grow={362} $center>求和=638</Field>
        <Field $width={143} $center>
          <ZoomButton type="button" aria-label="Zoom out">
            <StepGlyph viewBox="0 0 7 7"><path d="M0 3.500h7" /></StepGlyph>
          </ZoomButton>
          <ZoomRange type="range" aria-label="Zoom" min={0} max={100} defaultValue={53} />
          <ZoomButton type="button" aria-label="Zoom in">
            <StepGlyph viewBox="0 0 7 7"><path d="M0 3.500h7M3.500 0v7" /></StepGlyph>
          </ZoomButton>
        </Field>
        <Field $width={49}>120%</Field>
      </Status>
    </Shell>
  );
}
